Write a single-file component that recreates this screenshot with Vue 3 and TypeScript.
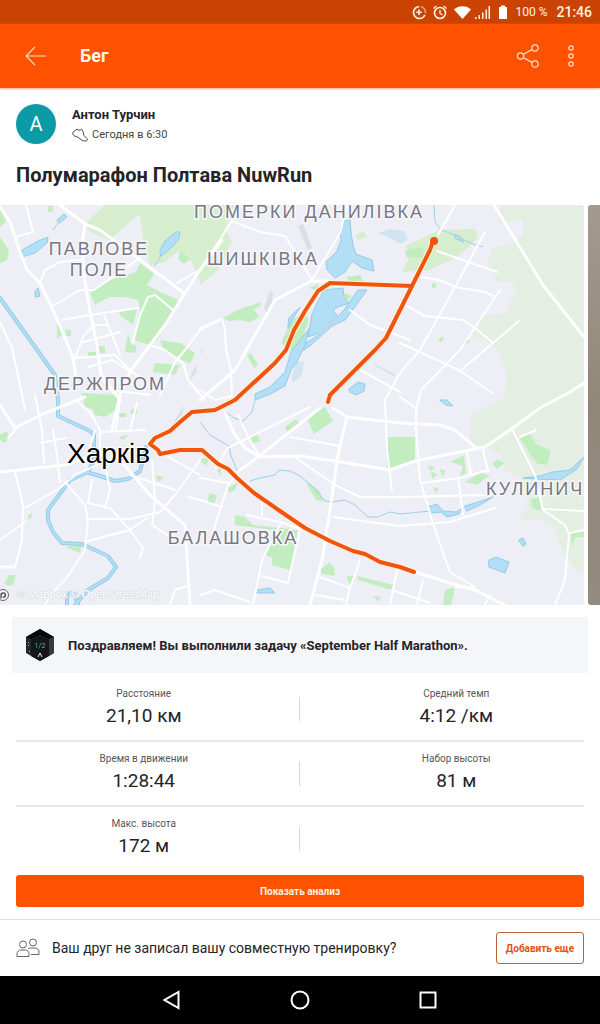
<script setup lang="ts">
interface Stat {
  label: string
  value: string
}

const rows: Stat[][] = [
  [
    { label: 'Расстояние', value: '21,10 км' },
    { label: 'Средний темп', value: '4:12 /км' },
  ],
  [
    { label: 'Время в движении', value: '1:28:44' },
    { label: 'Набор высоты', value: '81 м' },
  ],
  [{ label: 'Макс. высота', value: '172 м' }],
]

const paleLand: string[] = [
  'M500 205H584V605V572L575 570 562 550 552 525 540 520 520 520 528 505 522 478 505 470 500 455 485 447 470 445V415L505 397 507 375 498 350 485 340 472 338 482 316 505 313 516 290 512 281 496 282 488 262 492 248 512 244 523 235V220L508 221 498 225Z',
]

const lightParks: string[] = [
  'M105 205H235L228 222 215 246 200 280 192 262 180 250 165 262 150 266 144 245 140 214 125 226 110 240 90 232 85 224Z',
  'M402 272L412 252 405 246 440 230 475 229 478 238 460 255 430 270Z',
  'M355 236L363 231 367 236 358 240Z',
  'M200 285L218 270 232 242 221 222 200 230Z',
]

const parks: string[] = [
  'M90 293L110 280 120 277 136 272 140 263 154 274 147 285 160 292 178 300 174 310 168 322 157 340 150 345 133 340 138 318 140 308 138 300 125 297 110 297 100 302 95 305Z',
  'M0 208L6 222 0 227ZM0 237L9 250 7 260 0 263Z',
  'M57 323L65 332 57 339ZM66 330H71V336H66ZM119 312L137 309 133 325 121 316ZM128 333L131 344 137 346 135 353 125 352Z',
  'M160 340L180 343 195 353 190 364 182 360 164 350ZM155 363L180 365 175 375 153 372Z',
  'M88 352H96V356H88ZM99 346H105V353H99Z',
  'M82 393L118 395 118 408 105 417 95 415 92 409 85 407Z',
  'M48 206H53V212H48ZM180 250L190 259 184 264 178 259Z',
  'M405 250L422 247 425 258 406 257Z',
  'M223 318L240 309 261 302 260 306 254 309 259 317 250 322 240 320 229 321Z',
  'M247 355L251 353 258 365 254 368Z',
  'M281 342L292 320 305 312 309 320 300 345 293 351 286 348Z',
  'M309 288L318 284 318 291ZM346 277L360 275 363 281 350 281ZM344 293L352 296 345 303Z',
  'M306 417L325 407 333 421 314 434ZM285 427L296 419 299 423 288 433ZM249 438L257 434 260 441 252 444Z',
  'M387 437H415V462L387 469Z',
  'M0 435L7 431 9 438 4 443 0 440ZM9 575L16 575 12 586 4 584ZM28 515L32 513 31 519 28 519ZM65 547L82 543 80 553Z',
  'M209 493L217 495 214 505 208 502ZM228 488L238 482 235 490 229 493ZM200 460L210 456 206 466ZM217 470L221 468 221 476Z',
  'M235 515L245 517 253 525 298 530 293 558 290 570 272 565 272 558 266 555 274 530 235 525Z',
  'M320 570L330 562 334 568 335 576 322 574ZM358 576L393 585 392 590 358 580ZM346 577L355 575 350 584ZM373 596L380 597 379 602Z',
  'M445 590L455 587 451 605 443 605Z',
  'M119 437L129 434 123 440ZM119 413H126V417H119ZM131 409H137V414H131ZM156 475L164 477 158 482Z',
  'M519 437L530 434 536 444 551 451 547 465 538 464 531 455Z',
  'M492 464L497 459 504 463 497 469ZM531 499L540 497 541 511 532 508ZM571 531L584 532V537L575 537 572 547Z',
  'M428 465L435 468 430 471 437 474 433 479ZM440 469L446 471 442 477ZM451 462L464 455 466 473 460 476 463 466ZM465 482L480 473 490 475 477 485ZM433 487L439 489 436 493Z',
  'M431 286L434 282 437 286 434 289ZM438 341L442 336 444 339 441 342ZM465 342L468 338 470 341 467 344Z',
  'M306 482L319 490 324 501 316 500Z',
]

const greys: string[] = [
  'M298 226L303 224 312 248 308 250ZM264 308L270 291 273 292 272 305 267 314ZM200 352L203 349 201 354ZM172 425L184 405 182 415ZM189 382L195 365 197 371Z',
]

const faintWater: string[] = [
  'M378 233L390 229 404 231 408 240 400 244 390 238ZM291 380L296 363 304 361 302 375 294 382ZM373 363L395 374 394 376 375 366Z',
]

const lakes: string[] = [
  'M343 222L350 219 351 232 353 245 356 254 372 260 374 271 362 268 352 261 345 272 335 278 327 270 326 262 337 251 341 240 340 230Z',
  'M324 290L343 288 344 298 349 303 338 307 333 310 337 315 330 322 319 333 308 337 312 314Z',
  'M304 344L320 334 332 322 344 310 358 290 367 290 355 307 345 320 332 326 311 345 304 350Z',
  'M309 329L305 345 297 362 291 370 285 386 270 394 255 400 255 394 270 387 285 372 291 352Z',
  'M22 250L38 241 48 237 47 243 35 253 22 257ZM57 220L64 214 67 217 60 223ZM160 250L165 241 176 232 180 232 179 239 170 249 161 256ZM35 292L38 288 40 296 36 297Z',
  'M349 389L358 382 365 384 364 391 356 395 350 392Z',
  'M257 590L270 588 275 593 257 593Z',
  'M440 400L447 400 453 406 446 405Z',
  'M428 507L437 504 443 511 456 512 463 508 459 514 447 517 441 512 432 513ZM465 506L475 503 493 497 480 505 467 511Z',
  'M489 560L496 557 509 562 505 573 489 567ZM519 540L523 538 526 544 523 546Z',
  'M523 478L540 476 553 472 570 470 584 457 577 469 560 480 538 479Z',
  'M455 235L459 236 464 242 456 239ZM289 318L300 307 294 317 288 328Z',
]

const mainRivers: string[] = [
  'M0 298L55 375 58 400V416L90 431 94 435V460L88 472 70 480 48 510V520L53 532 62 543 82 544 108 556 116 567 108 578 88 590 75 605',
  'M70 480L86 472 100 476 115 481 128 479 140 471 146 447',
  'M67 605V595L73 592 78 604',
]

const streams: string[] = [
  'M255 400L252 412 243 421 234 418 227 413',
  'M200 422L210 435 229 446 231 456 237 470',
  'M250 481L260 478 275 475 279 470 290 471 300 476 312 486 325 501 332 502 345 500 355 505 368 517 378 517 390 512 400 514 430 511',
  'M434 205L435 222 441 230 455 235 470 243 483 247',
  'M53 230L60 220M155 266L161 255',
]

const wideRoads: string[] = [
  'M0 207L10 222 20 252 27 270 40 283 52 308 63 333 73 358 76 378',
  'M60 205L85 224 100 230 140 260 185 294',
  'M85 224L82 245 84 275 90 312 97 345 101 375 120 400',
  'M222 240L200 270 185 293 165 325 150 345 130 372 120 395 112 430',
  'M494 205L543 285 584 337',
  'M584 383L570 392 540 408 510 430 485 447 415 461 390 470 335 461 300 456 260 457 245 448 235 435 225 413',
  'M347 417L338 455 330 510 322 560 310 605',
  'M320 408L258 457 240 470',
  'M333 408L347 417 400 423 440 425 455 430 475 447',
  'M0 472L65 465 110 450',
  'M0 405L15 428 45 413 85 397',
  'M415 572L450 583 475 590 505 605',
  'M120 460L150 495 185 525 190 605',
  'M15 567L0 567M200 400L235 370 275 300 311 281 327 281',
]

const roads: string[] = [
  'M232 221L200 270 177 283M232 221L260 232 285 236 312 280 340 233 347 205',
  'M26 205L33 232 15 237M40 283L45 270 60 262 80 260M53 306L80 290 94 290 130 265 140 258',
  'M62 320L90 315 138 308M133 342L140 315 148 297 155 295 173 310M150 345L165 350 183 363 188 380 205 400',
  'M200 330L185 350 175 362 160 395M0 322L12 348 20 385 25 410',
  'M75 358L84 335 95 325 108 325M80 343L120 332M104 315L112 335 120 355M76 358L115 355 130 370M88 367L112 360 145 380',
  'M200 328L222 319 225 330 226 350 231 370 232 396 215 400 200 390M222 319L200 330',
  'M485 232L455 287 420 350 400 373 385 400 387 450 392 490M437 251L497 272',
  'M420 277L440 280 455 287 485 292 495 297M500 290L460 350 421 390 416 410V430L420 480 435 530 450 572 475 587',
  'M405 305L425 316 463 320 475 328 492 342M520 320L459 372M400 343L459 370 492 393M350 310L370 325 410 340',
  'M455 205L438 235M400 397L417 409M360 370L400 392',
  'M240 470L228 485 220 510 212 535M216 468L228 448 310 407M238 415L250 440 260 457M290 437L340 446',
  'M295 457L335 485 360 497 400 497 490 495M247 515L280 522 300 529 288 583 262 576M280 525L262 560 253 605',
  'M333 517L355 520 400 526 450 522 495 508M262 500V515M320 577L350 588 360 560M200 595L215 590 250 602M315 595L345 600M350 587L346 605M397 570L390 605M392 590L430 603',
  'M467 453L471 475M483 450L488 471M458 478L463 515M422 483L460 478 488 470M512 429L535 475 543 510 565 525 569 535 565 580 555 605M520 437L536 430M543 509L584 511M570 533L584 530',
  'M423 580L417 605M455 587L475 587M490 595L485 605',
  'M15 472L23 505 22 540 15 567M25 508L60 488 75 475 130 450M0 540L25 522M8 438L17 428M75 400L90 412 100 430V450M35 395L42 430 44 463',
  'M65 482L85 505 88 520 85 550 65 580 50 595 45 605M88 519L130 519 160 512 175 495 200 460',
  'M88 541L130 530 147 518M88 503L110 508 130 530 143 548 140 558M105 465L110 490 105 508M88 503L92 480',
  'M53 430L57 455 60 482M40 443L66 438M85 465L95 430M116 430L120 400M130 430L137 403M100 432L145 430',
  'M152 460L155 500 152 525 170 537M130 475L175 490M165 455L200 475M188 497L200 500M170 605L175 590 190 585M200 478L228 483M200 500L222 507',
  'M105 378L135 385 145 390M112 390L150 395',
]

const routes: string[] = [
  'M433 241L430 250 412 286 386 338 375 350 330 395 328 402',
  'M412 286L330 283 318 291 305 311 294 330 286 350 275 363 235 400 215 410 192 412 180 422 170 431 155 438 150 444 158 450 160 454 170 452 180 450 202 450 218 464 228 469 237 478 254 493 280 511 305 528 330 541 353 551 365 554 380 562 400 567 414 572',
]
</script>

<template>
  <div class="screen">
    <div class="status">
      <svg class="status-icons" viewBox="0 0 98 18" aria-hidden="true">
        <g fill="none" stroke="#fff2e4" stroke-width="1.6">
          <path d="M7 3.5a6 6 0 1 0 6 8.5M7 6.500v5.500M4.200 9.300h5.600" />
          <path d="M8.500 3.500a6 6 0 0 1 4.800 7" stroke="#e79a73" />
          <circle cx="28" cy="10" r="5.500" />
          <path d="M28 7v3.500l2.500 1.500M21.500 5.500l3-2.500M34.500 5.500l-3-2.500" stroke-width="1.300" />
        </g>
        <path d="M42 6.500C46 2 55 2 59 6.500L50.500 16z" fill="#fff" />
        <path d="M63 14h1.500v2H63zM66.500 12h1.500v4h-1.500zM70 9.500h1.500V16H70zM73.500 6.500H75V16h-1.500zM76.500 3H78v13h-1.500z" fill="#fff2e4" />
        <path d="M87 4h2V2.500h4V4h2v12h-8z" fill="#fff" />
      </svg>
      <span class="battery">100 %</span>
      <span class="clock">21:46</span>
    </div>

    <header class="bar">
      <button class="icon-button" type="button" aria-label="Назад">
        <svg width="24" height="24" viewBox="0 0 24 24" fill="none" stroke="#ffe1c8" stroke-width="1.100">
          <path d="M22 12H2M11 3L2 12l9 9" />
        </svg>
      </button>
      <h1>Бег</h1>
      <button class="icon-button" type="button" aria-label="Поделиться">
        <svg width="24" height="24" viewBox="0 0 24 24" fill="none" stroke="#ffe1c8" stroke-width="1.200">
          <circle cx="4.500" cy="12" r="3.200" />
          <circle cx="19" cy="4" r="3.200" />
          <circle cx="19" cy="20" r="3.200" />
          <path d="M7.500 10.300l8.500-4.700M7.500 13.700l8.500 4.700" />
        </svg>
      </button>
      <button class="icon-button more" type="button" aria-label="Ещё">
        <svg width="24" height="24" viewBox="0 0 24 24" fill="none" stroke="#ffe1c8" stroke-width="1.200">
          <circle cx="12" cy="4" r="2.200" />
          <circle cx="12" cy="12" r="2.200" />
          <circle cx="12" cy="20" r="2.200" />
        </svg>
      </button>
    </header>

    <main>
      <section class="athlete">
        <div class="avatar">A</div>
        <div class="who">
          <div class="name">Антон Турчин</div>
          <div class="when">
            <svg width="16" height="16" viewBox="0 0 16 16" fill="none" stroke="#444" stroke-width="1">
              <path d="M.800 5.500L5 2C6.200 3.600 8 3.400 9.500 2.200L11 4.500 12 8.500 15 11.500C15.800 13 15 14 13.500 14 10.500 14 8.500 12.500 6.500 10.500 4.500 9.500 2 9.500 1 7.500z" />
            </svg>
            <span>Сегодня в 6:30</span>
          </div>
        </div>
      </section>
      <h2>Полумарафон Полтава NuwRun</h2>

      <div class="media">
        <svg class="map" viewBox="0 205 584 400" preserveAspectRatio="xMidYMid slice" role="img" aria-label="Карта маршрута">
          <rect y="205" width="584" height="400" fill="#edeef6" />
          <path v-for="d in paleLand" :key="d" :d="d" fill="#e4eee3" />
          <path v-for="d in lightParks" :key="d" :d="d" fill="#d6eecd" />
          <path v-for="d in parks" :key="d" :d="d" fill="#c1edbf" />
          <path v-for="d in greys" :key="d" :d="d" fill="#dcdee6" />
          <path v-for="d in faintWater" :key="d" :d="d" fill="#d0e5ef" />
          <g class="river-edge"><path v-for="d in mainRivers" :key="d" :d="d" /></g>
          <g class="river"><path v-for="d in mainRivers" :key="d" :d="d" /></g>
          <g class="stream"><path v-for="d in streams" :key="d" :d="d" /></g>
          <path v-for="d in lakes" :key="d" :d="d" fill="#b2dff5" stroke="#95cbe9" />
          <g class="road"><path v-for="d in roads" :key="d" :d="d" /></g>
          <g class="road wide"><path v-for="d in wideRoads" :key="d" :d="d" /></g>
          <g class="halo"><path v-for="d in routes" :key="d" :d="d" /></g>
          <g class="route"><path v-for="d in routes" :key="d" :d="d" /></g>
          <circle cx="434" cy="241" r="4" fill="#f05510" />
          <g class="district">
            <text x="309" y="218">ПОМЕРКИ ДАНИЛІВКА</text>
            <text x="99" y="255">ПАВЛОВЕ</text>
            <text x="99" y="276">ПОЛЕ</text>
            <text x="263" y="265">ШИШКІВКА</text>
            <text x="105" y="390">ДЕРЖПРОМ</text>
            <text x="233" y="544">БАЛАШОВКА</text>
            <text class="start" x="486" y="495">КУЛИНИЧ</text>
          </g>
          <text class="city" x="67" y="463">Харків</text>
          <circle cx="3" cy="595" r="5.500" fill="#f5f5f8" stroke="#666" />
          <path d="M1 598v-3a2.200 2.200 0 1 1 2.200 2.200" fill="none" stroke="#444" stroke-width="1.300" />
          <text class="credit" x="17" y="598">© Mapbox © OpenStreetMap</text>
        </svg>
        <div class="photo"></div>
      </div>

      <section class="congrats">
        <svg width="28" height="32" viewBox="0 0 28 32" aria-hidden="true">
          <path d="M14 0l14 8v16l-14 8-14-8V8z" fill="#26262c" />
          <path d="M14 0l14 8-5 2-9-4-9 4-5-2z" fill="#080808" />
          <path d="M5 10l9-4 9 4v17l-9 5-9-5z" fill="#151619" />
          <path d="M23 10l5-2v16l-5 3z" fill="#383840" />
          <path d="M2.500 13v6M3.500 22v2" stroke="#aaa" stroke-dasharray="1 2" />
          <text x="14" y="19" text-anchor="middle">1/2</text>
          <path d="M12 28l2-4 2 4" fill="none" stroke="#eee" />
        </svg>
        <strong>Поздравляем! Вы выполнили задачу «September Half Marathon».</strong>
      </section>

      <div class="stats">
        <div v-for="(row, i) in rows" :key="i" class="stat-row">
          <dl v-for="stat in row" :key="stat.label" class="stat">
            <dt>{{ stat.label }}</dt>
            <dd>{{ stat.value }}</dd>
          </dl>
        </div>
      </div>

      <div class="action">
        <button class="primary" type="button">Показать анализ</button>
      </div>

      <section class="invite">
        <svg width="24" height="20" viewBox="0 0 24 20" fill="none" stroke="#666" stroke-width="1">
          <circle cx="7" cy="6.500" r="3.500" />
          <circle cx="17" cy="4.500" r="3.500" />
          <path d="M1 18.500V16c0-2.500 2-4 4-4h4c2.500 0 4 1.500 4 4v2.500zM12 10.500c1-.5 2-.5 3-.5h4c2.500 0 4 1.500 4 4v2.500h-8" />
        </svg>
        <p>Ваш друг не записал вашу совместную тренировку?</p>
        <button class="outline" type="button">Добавить еще</button>
      </section>
    </main>

    <nav class="system">
      <button type="button" aria-label="Назад">
        <svg width="24" height="24" viewBox="0 0 24 24"><path d="M18.500 4v16L4.500 12z" /></svg>
      </button>
      <button type="button" aria-label="Домой">
        <svg width="24" height="24" viewBox="0 0 24 24"><circle cx="12" cy="12" r="8.500" /></svg>
      </button>
      <button type="button" aria-label="Недавние">
        <svg width="24" height="24" viewBox="0 0 24 24"><rect x="4.500" y="4.500" width="15" height="15" /></svg>
      </button>
    </nav>
  </div>
</template>

<style>
body {
  margin: 0;
  background: #fff;
}
</style>

<style scoped>
.screen {
  min-height: 100vh;
  display: flex;
  flex-direction: column;
  font-family: Roboto, "Liberation Sans", sans-serif;
  color: #242428;
  background: #fff;
}
button {
  font-family: inherit;
  cursor: pointer;
}
.status {
  height: 24px;
  display: flex;
  align-items: center;
  justify-content: flex-end;
  padding-right: 8px;
  background: #cb4302;
  color: #fff2e4;
}
.status-icons {
  width: 98px;
  height: 18px;
  margin-right: 5px;
}
.battery {
  font-size: 12px;
  margin-right: 9px;
}
.clock {
  font-size: 14px;
  font-weight: 500;
}
.bar {
  height: 64px;
  display: flex;
  align-items: center;
  padding: 0 9px 0 16px;
  background: #fe5200;
  color: #fff2e4;
  box-shadow: 0 1px 2px #f3a68a;
}
.bar h1 {
  flex: 1;
  margin: 0 0 0 24px;
  font-size: 18px;
  line-height: 24px;
  font-weight: 700;
}
.icon-button {
  width: 40px;
  height: 40px;
  padding: 8px;
  border: 0;
  background: none;
}
.icon-button svg {
  display: block;
}
.more {
  margin-left: 3px;
}
main {
  flex: 1;
}
.athlete {
  display: flex;
  gap: 16px;
  padding: 16px 16px 0;
}
.avatar {
  width: 40px;
  height: 40px;
  border-radius: 50%;
  background: #0c9aa6;
  color: #fff;
  font-size: 20px;
  line-height: 41px;
  text-align: center;
}
.who {
  padding-top: 1px;
}
.name {
  font-size: 13px;
  line-height: 20px;
  font-weight: 700;
}
.when {
  display: flex;
  align-items: center;
  gap: 4px;
  font-size: 11px;
  line-height: 20px;
  color: #444;
}
h2 {
  margin: 16px 16px;
  font-size: 20px;
  line-height: 28px;
  font-weight: 700;
}
.media {
  display: flex;
  gap: 4px;
  overflow: hidden;
}
.map {
  flex: 1;
  min-width: 0;
  height: 400px;
  border-radius: 0 3px 3px 0;
}
.map path {
  stroke-linejoin: round;
  stroke-linecap: round;
}
.photo {
  width: 12px;
  border-radius: 3px 0 0 3px;
  background: linear-gradient(#a39b8e, #918779 50%, #938b7f);
}
.river-edge {
  fill: none;
  stroke: #97cce8;
  stroke-width: 4;
}
.river {
  fill: none;
  stroke: #b2dff5;
  stroke-width: 2;
}
.stream {
  fill: none;
  stroke: #9ed0ea;
  stroke-width: 1;
}
.road {
  fill: none;
  stroke: #fff;
  stroke-width: 2;
}
.wide {
  stroke-width: 3;
}
.halo {
  fill: none;
  stroke: #fff2df;
  stroke-width: 6;
}
.route {
  fill: none;
  stroke: #f05510;
  stroke-width: 4;
}
.district {
  font-family: "Liberation Sans", Arial, sans-serif;
  font-size: 18px;
  letter-spacing: 2px;
  text-anchor: middle;
  fill: #777883;
  stroke: #f7f7fa;
  stroke-width: 3;
  paint-order: stroke;
}
.start {
  text-anchor: start;
}
.city {
  font-family: "Liberation Sans", Arial, sans-serif;
  font-size: 28px;
  fill: #000;
  stroke: #fff;
  stroke-width: 2;
  paint-order: stroke;
}
.credit {
  font-family: "Liberation Sans", Arial, sans-serif;
  font-size: 11px;
  fill: #fff;
  stroke: #d5d8df;
  stroke-width: 1;
  paint-order: stroke;
}
.congrats {
  display: flex;
  align-items: center;
  gap: 14px;
  min-height: 56px;
  margin: 12px 12px 4px;
  padding: 0 14px;
  background: #f5f6fa;
  font-size: 13px;
}
.congrats text {
  font-size: 7px;
  fill: #3dbdb0;
}
.stats {
  margin: 0 16px;
}
.stat-row {
  position: relative;
  display: grid;
  grid-template-columns: 1fr 1fr;
  column-gap: 57px;
  height: 63px;
  border-bottom: 2px solid #e8e8e8;
}
.stat-row:last-child {
  border-bottom: 0;
}
.stat-row::after {
  content: "";
  position: absolute;
  left: calc(50% - 1px);
  top: 20px;
  width: 1px;
  height: 24px;
  background: #d6d6d6;
}
.stat {
  margin: 0;
  padding-top: 9px;
  text-align: center;
}
dt {
  font-size: 10px;
  line-height: 16px;
  color: #55555a;
}
dd {
  margin: 2px 0 0;
  font-size: 19px;
  line-height: 24px;
}
.action {
  padding: 5px 16px 12px;
}
.primary {
  display: block;
  width: 100%;
  height: 32px;
  border: 0;
  border-radius: 3px;
  background: #fe5200;
  color: #fff2e4;
  font-size: 10px;
  font-weight: 700;
}
.invite {
  display: flex;
  align-items: center;
  gap: 12px;
  min-height: 56px;
  padding: 0 16px;
  border-top: 1px solid #e2e2e2;
}
.invite p {
  flex: 1;
  margin: 0;
  font-size: 14px;
  line-height: 20px;
}
.outline {
  width: 88px;
  height: 32px;
  padding: 0;
  border: 1px solid #b5673a;
  border-radius: 3px;
  background: #fff;
  color: #e2530f;
  font-size: 10px;
  font-weight: 700;
}
.system {
  height: 48px;
  display: flex;
  align-items: center;
  justify-content: center;
  gap: 80px;
  background: #000;
}
.system button {
  width: 48px;
  height: 48px;
  padding: 12px;
  border: 0;
  background: none;
}
.system svg {
  display: block;
  fill: none;
  stroke: #fff;
  stroke-width: 2;
}
</style>
